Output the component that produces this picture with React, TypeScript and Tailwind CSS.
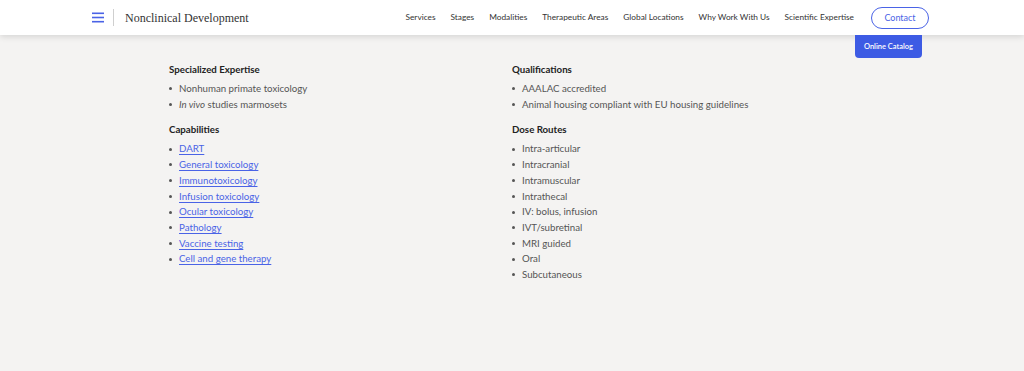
const navItems = [
  "Services",
  "Stages",
  "Modalities",
  "Therapeutic Areas",
  "Global Locations",
  "Why Work With Us",
  "Scientific Expertise",
];

const capabilities = [
  "DART",
  "General toxicology",
  "Immunotoxicology",
  "Infusion toxicology",
  "Ocular toxicology",
  "Pathology",
  "Vaccine testing",
  "Cell and gene therapy",
];

const doseRoutes = [
  "Intra-articular",
  "Intracranial",
  "Intramuscular",
  "Intrathecal",
  "IV: bolus, infusion",
  "IVT/subretinal",
  "MRI guided",
  "Oral",
  "Subcutaneous",
];

function Bullet() {
  return <span className="mr-[7px] inline-block h-[3px] w-[3px] shrink-0 rounded-full bg-[#555]" />;
}

function Section({ title, children }: { title: string; children: React.ReactNode }) {
  return (
    <div className="mb-[9px]">
      <h3 className="mb-[4px] text-[9.7px] font-bold leading-[16px] text-[#222]">{title}</h3>
      <ul>{children}</ul>
    </div>
  );
}

function Item({ children }: { children: React.ReactNode }) {
  return (
    <li className="flex items-center text-[9.7px] leading-[15.7px] text-[#555]">
      <Bullet />
      <span>{children}</span>
    </li>
  );
}

function LinkItem({ label }: { label: string }) {
  return (
    <li className="flex items-center text-[9.7px] leading-[15.7px] text-[#555]">
      <Bullet />
      <a href="#" className="text-[#4a63e6] underline underline-offset-[2px]">
        {label}
      </a>
    </li>
  );
}

export default function App() {
  return (
    <div className="min-h-[371px] bg-[#f4f3f2] font-['Lato',sans-serif]">
      {/* Header */}
      <header className="relative z-10 flex h-[35px] items-center bg-white pl-[92px] pr-[95px] shadow-[0_2px_6px_rgba(0,0,0,0.12)]">
        <svg width="12" height="11" viewBox="0 0 12 11" className="shrink-0">
          <rect x="0" y="0.5" width="12" height="1.6" fill="#4a63e6" />
          <rect x="0" y="4.7" width="12" height="1.6" fill="#4a63e6" />
          <rect x="0" y="8.9" width="12" height="1.6" fill="#4a63e6" />
        </svg>
        <div className="ml-[9px] h-[17px] w-px bg-[#cfcfcf]" />
        <span className="ml-[11px] font-['Liberation_Serif',serif] text-[12px] text-[#333]">
          Nonclinical Development
        </span>
        <nav className="ml-auto flex items-center gap-[15px] text-[8.3px] text-[#333]">
          {navItems.map((item) => (
            <a key={item} href="#">
              {item}
            </a>
          ))}
          <a
            href="#"
            className="ml-[2px] flex h-[22px] w-[58px] items-center justify-center rounded-full border-[1.5px] border-[#4a63e6] text-[9px] text-[#4a63e6]"
          >
            Contact
          </a>
        </nav>
        <a
          href="#"
          className="absolute right-[102px] top-[35px] flex h-[23px] w-[67px] items-center justify-center rounded-b-[4px] bg-[#3d5be4] text-[7.5px] font-semibold text-white"
        >
          Online Catalog
        </a>
      </header>

      {/* Content */}
      <main className="mx-auto grid w-[686px] grid-cols-2 pt-[26px]">
        <div>
          <Section title="Specialized Expertise">
            <Item>Nonhuman primate toxicology</Item>
            <Item>
              <em>In vivo</em> studies marmosets
            </Item>
          </Section>
          <Section title="Capabilities">
            {capabilities.map((c) => (
              <LinkItem key={c} label={c} />
            ))}
          </Section>
        </div>
        <div>
          <Section title="Qualifications">
            <Item>AAALAC accredited</Item>
            <Item>Animal housing compliant with EU housing guidelines</Item>
          </Section>
          <Section title="Dose Routes">
            {doseRoutes.map((d) => (
              <Item key={d}>{d}</Item>
            ))}
          </Section>
        </div>
      </main>
    </div>
  );
}
